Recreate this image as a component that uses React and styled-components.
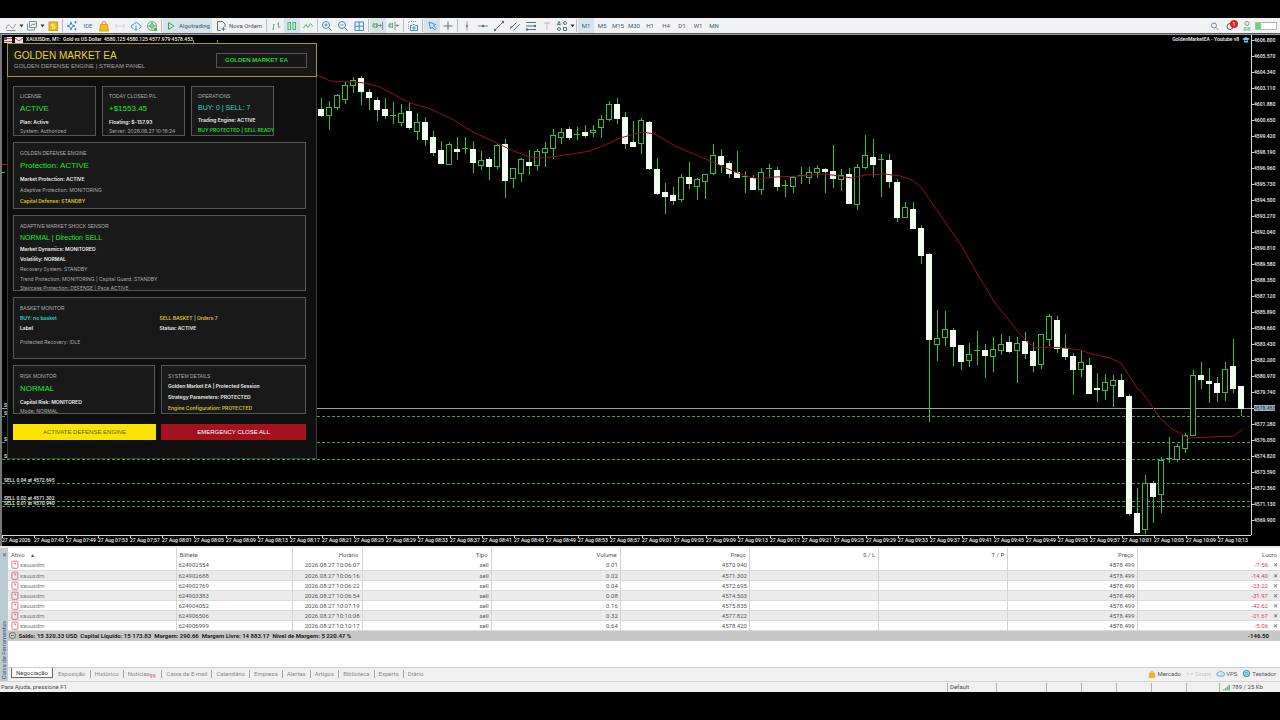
import React from "react";
import styled, { createGlobalStyle } from "styled-components";

const GlobalStyle = createGlobalStyle`
  * {
    box-sizing: border-box;
  }
  body {
    margin: 0;
    background: #000;
    font-family: Roboto, "Open Sans", sans-serif;
    font-size: 6px;
    line-height: 10px;
  }
  button {
    font: inherit;
    color: inherit;
    background: none;
    border: none;
    border-radius: 0;
    padding: 0;
    cursor: pointer;
  }
`;

const Page = styled.div`
  display: flex;
  flex-direction: column;
  min-height: 100vh;
  padding: 18px 0 28px;
`;

/* ---------- toolbar ---------- */

const Toolbar = styled.header`
  display: flex;
  align-items: stretch;
  height: 16px;
  padding: 0 3px 0 4px;
  background: #f1f2f3;
  border-bottom: 1px solid #55585a;
  color: #56707f;
`;

const ToolButton = styled.button`
  display: flex;
  align-items: center;
  justify-content: center;
  gap: 2px;
  width: ${(p) => p.$width || 16}px;
  flex: none;
  white-space: nowrap;
  background: ${(p) => (p.$active ? "#d5e4ea" : "transparent")};
  color: ${(p) => p.$color || "#56707f"};
`;

const Separator = styled.span`
  width: 1px;
  margin: 1px;
  background: #b9bcbe;
  flex: none;
`;

const Spacer = styled.span`
  flex: 1;
`;

const Alert = styled.span`
  position: relative;
  display: flex;
`;

const AlertCount = styled.span`
  position: absolute;
  top: 0;
  right: -1px;
  width: 8px;
  height: 8px;
  border-radius: 50%;
  background: #d32626;
  color: #fff;
  font-size: 6px;
  line-height: 8px;
  text-align: center;
`;

const Battery = styled.span`
  align-self: center;
  width: 22px;
  height: 8px;
  border: 1px solid #b4b8ba;
  background: linear-gradient(to right, #5be35b 5px, #fff 5px);
`;

const Svg = styled.svg`
  display: block;
  flex: none;
  fill: none;
  stroke: currentColor;
  stroke-width: 1;
`;

const Icon = ({ size = 12, children }) => (
  <Svg width={size} height={size} viewBox="0 0 12 12" aria-hidden="true">
    {children}
  </Svg>
);

const Caret = () => (
  <Svg width="5" height="4" viewBox="0 0 5 4" aria-hidden="true">
    <path d="M0.5 0.5h4L2.5 3.2z" fill="#333" stroke="none" />
  </Svg>
);

const icons = {
  line: <path d="M1 8.500c2-5 3-4 5-1.500s3 .5 4.500-3M1.500 10.500h9" stroke="#8a979e" />,
  layers: (
    <>
      <path d="M3.500 1.500h7v6h-7zM1.500 3.500v6.500h7v-2" stroke="#7d929e" />
      <path d="M5 6l1.500-2 1.500 1 1.500-2" stroke="#6fa47a" />
    </>
  ),
  dollar: (
    <>
      <rect x="2" y="2" width="8.500" height="8.500" fill="#e9bb12" stroke="#cf9f08" />
      <path d="M7.800 4.200h-3v2h3v2h-3" stroke="#fff3c0" />
    </>
  ),
  spark: (
    <>
      <path d="M5 2l1 3 3 1-3 1-1 3-1-3-3-1 3-1z" stroke="#3d97c9" />
      <path d="M9.500 1v2.500M8.200 2.200h2.500M9.500 8v2.500M8.200 9.200h2.500" stroke="#3d97c9" />
    </>
  ),
  bag: (
    <>
      <path d="M4 5V3.500a2 2 0 0 1 4 0V5" stroke="#c79a1a" />
      <path d="M2.500 4.500h7l1 6.500h-9z" fill="#f1bb16" stroke="#dca50f" />
    </>
  ),
  signal: <path d="M2 4v4M4 5v2M6 5.500v1M8 5v2M10 4v4" stroke="#c8cdd0" />,
  cloud: (
    <>
      <path d="M3.500 8.500a2 2 0 0 1 0-4 3 3 0 0 1 5.500 0 2 2 0 0 1 0 4" stroke="#4d9cc8" />
      <path d="M6 5.500v5M4.500 9l1.500 1.500L7.500 9" stroke="#4d9cc8" />
    </>
  ),
  globe: (
    <>
      <circle cx="6" cy="6" r="4.500" stroke="#5db777" />
      <circle cx="6" cy="6" r="2.200" stroke="#5db777" />
      <path d="M1.500 6h9M6 1.500v9" stroke="#5db777" />
      <circle cx="9.500" cy="9.500" r="1.800" fill="#43b060" stroke="none" />
    </>
  ),
  play: <path d="M3.500 2.500l5.500 3.500-5.500 3.500z" stroke="#2fae62" />,
  order: (
    <>
      <path d="M2.500 1.500h5l2.500 2.500v3M2.500 1.500v9h3" stroke="#62737d" />
      <path d="M8.500 7v4M6.500 9h4" stroke="#62737d" />
    </>
  ),
  bars: <path d="M3.500 4v6M2 9h1.500M3.500 5H5M8.500 2v6M7 4h1.500M8.500 7h2" stroke="#7cae88" />,
  candles: (
    <>
      <rect x="2" y="2.500" width="2.500" height="7" stroke="#49b86b" />
      <rect x="7" y="2.500" width="2.500" height="7" stroke="#49b86b" />
    </>
  ),
  wave: <path d="M1.500 8l2.500-3.500 2 3 2.500-4 2.500 3" stroke="#49b86b" />,
  zoomIn: (
    <>
      <circle cx="5" cy="5" r="3.500" stroke="#3a8fc2" />
      <path d="M7.600 7.600l3 3M3.500 5h3M5 3.500v3" stroke="#3a8fc2" />
    </>
  ),
  zoomOut: (
    <>
      <circle cx="5" cy="5" r="3.500" stroke="#3a8fc2" />
      <path d="M7.600 7.600l3 3M3.500 5h3" stroke="#3a8fc2" />
    </>
  ),
  tiles: <path d="M2 2h8.500v8.500H2zM6.200 2v8.500M2 6.200h8.500" stroke="#3a8fc2" />,
  shift: (
    <>
      <path d="M2 3v5M4.500 3v5M1 4h4.500v3H1z" stroke="#58bb76" />
      <path d="M6 5.500h3M8 4l1.500 1.500L8 7M10.500 2v8" stroke="#7d929e" />
    </>
  ),
  scroll: (
    <>
      <path d="M2 3v5M4.500 3v5M1 4h3.500v3H1z" stroke="#58bb76" />
      <path d="M7 2v8M11 5.500H8.500M9.500 4L8 5.500 9.500 7" stroke="#7d929e" />
    </>
  ),
  camera: (
    <>
      <path d="M1.500 9V1.500h8.500" stroke="#9aa7ae" strokeDasharray="1 1" />
      <path d="M3.500 5.500h1.500l1-1h1.500l1 1h2v5h-7z" stroke="#3f8fb9" />
      <circle cx="7" cy="8" r="1.200" stroke="#3f8fb9" />
    </>
  ),
  cursor: <path d="M3 2l6.500 2.500-2 1.200 2.500 2.800-1.500 1.500L6 7 4.500 9z" stroke="#3f92c4" />,
  cross: <path d="M6 1.500v9M1.500 6h9" stroke="#5c7480" />,
  vline: (
    <>
      <path d="M6 1.500v9" stroke="#8797a0" />
      <circle cx="6" cy="6" r="1" fill="#5c7480" stroke="none" />
    </>
  ),
  hline: (
    <>
      <path d="M1 6h10" stroke="#7b8d97" />
      <circle cx="6" cy="6" r="1.300" fill="#5c7480" stroke="none" />
    </>
  ),
  trend: (
    <>
      <path d="M2 10l8-8" />
      <circle cx="2" cy="10" r="1.200" fill="#56707f" stroke="none" />
      <circle cx="10" cy="2" r="1.200" fill="#56707f" stroke="none" />
    </>
  ),
  channel: <path d="M1.500 8.500l6-6M4.500 10.500l6-6M1.500 8.500l1-2.500M9 6l1.500-1.500" />,
  fibo: (
    <>
      <path d="M1 2.500h10M1 6h8M1 9.500h10" />
      <circle cx="10" cy="6" r="1.200" fill="#56707f" stroke="none" />
      <circle cx="2" cy="9.500" r="1.200" fill="#56707f" stroke="none" />
    </>
  ),
  text: <path d="M3 3h6M6 3v7" stroke="#b2bcc1" />,
  shapes: (
    <>
      <path d="M3 1.500l1.500 3h-3zM7.500 7.500h3v3h-3z" />
      <circle cx="9" cy="3" r="1.500" />
      <circle cx="3" cy="9" r="1.500" />
    </>
  ),
  search: (
    <>
      <circle cx="5" cy="5.500" r="2.500" stroke="#768ea0" />
      <path d="M7 7.500l2.500 2.500" stroke="#768ea0" />
    </>
  ),
  bell: <circle cx="5" cy="6.500" r="3" stroke="#4c5a62" />,
  user: (
    <>
      <circle cx="6" cy="3.500" r="2" stroke="#58b569" />
      <path d="M2.500 8h7M2.500 10h7M4 7v4M8 7v4" stroke="#7cc58a" />
    </>
  ),
  doc: (
    <>
      <rect x="2.500" y="1.500" width="8" height="9.500" rx="1" stroke="#d0526a" />
      <path d="M5 4h2.500v2" stroke="#d0526a" />
    </>
  ),
  vps: <path d="M3.500 9.500a2.500 2.500 0 0 1 0-5 3 3 0 0 1 5.500 0 2.500 2.500 0 0 1 0 5z" fill="#cfe6f4" stroke="#4b94c2" />,
  chip: (
    <>
      <circle cx="6" cy="6" r="4" fill="#d5eef6" stroke="#3a96bd" strokeWidth="1.500" />
      <path d="M4.500 4.500h3v3h-3z" stroke="#3a96bd" />
    </>
  ),
  network: <path d="M2 10V8.500M4.500 10V7M7 10V5M9.500 10V2.500" stroke="#4bb36a" strokeWidth="1.800" />,
  balance: (
    <>
      <circle cx="6" cy="6" r="4.200" stroke="#555" />
      <path d="M4 6h4" stroke="#555" />
    </>
  ),
};

const Tool = ({ name, label, ...rest }) => (
  <ToolButton type="button" aria-label={label || name} {...rest}>
    <Icon>{icons[name]}</Icon>
  </ToolButton>
);

const frames = ["M1", "M5", "M15", "M30", "H1", "H4", "D1", "W1", "MN"];

const TopBar = () => (
  <Toolbar>
    <ToolButton type="button" $width={21} aria-label="Charts">
      <Icon>{icons.line}</Icon>
      <Caret />
    </ToolButton>
    <ToolButton type="button" $width={20} aria-label="Profiles">
      <Icon>{icons.layers}</Icon>
      <Caret />
    </ToolButton>
    <Tool name="dollar" />
    <Separator />
    <Tool name="spark" />
    <ToolButton type="button" $color="#4a6a94">IDE</ToolButton>
    <Tool name="bag" />
    <Tool name="signal" />
    <Tool name="cloud" />
    <Tool name="globe" />
    <Separator />
    <ToolButton type="button" $width={49} $active $color="#43525c">
      <Icon>{icons.play}</Icon>
      Algotrading
    </ToolButton>
    <ToolButton type="button" $width={53} $color="#43525c">
      <Icon>{icons.order}</Icon>
      Nova Ordem
    </ToolButton>
    <Separator />
    <Tool name="bars" />
    <Tool name="candles" $active />
    <Tool name="wave" />
    <Separator />
    <Tool name="zoomIn" />
    <Tool name="zoomOut" />
    <Tool name="tiles" />
    <Separator />
    <Tool name="shift" $active />
    <Tool name="scroll" />
    <Separator />
    <Tool name="camera" />
    <Separator />
    <Tool name="cursor" $active />
    <Tool name="cross" />
    <Separator />
    <Tool name="vline" />
    <Tool name="hline" />
    <Tool name="trend" />
    <Tool name="channel" />
    <Tool name="fibo" />
    <Tool name="text" />
    <ToolButton type="button" $width={20} aria-label="Shapes">
      <Icon>{icons.shapes}</Icon>
      <Caret />
    </ToolButton>
    <Separator />
    {frames.map((f) => (
      <ToolButton type="button" key={f} $active={f === "M1"} $color="#3f5f70">
        {f}
      </ToolButton>
    ))}
    <Spacer />
    <Tool name="search" />
    <ToolButton type="button" aria-label="Notifications">
      <Alert>
        <Icon>{icons.bell}</Icon>
        <AlertCount>1</AlertCount>
      </Alert>
    </ToolButton>
    <Tool name="user" />
    <Battery />
  </Toolbar>
);

/* ---------- chart ---------- */

const ChartArea = styled.section`
  position: relative;
  display: grid;
  grid-template-columns: 1fr 29px;
  grid-template-rows: 500px 11px;
  border-top: 1px solid #9a9a9a;
  border-left: 2px solid #777;
  background: #000;
  color: #f2f2f2;
  font-size: 5px;
  font-weight: 500;
  overflow: hidden;
`;

const Plot = styled.svg`
  display: block;
  width: 100%;
  height: 500px;
`;

const PriceAxis = styled.div`
  border-left: 1px solid #d8d8d8;
  margin-top: -3px;
`;

const Price = styled.div`
  display: flex;
  align-items: center;
  height: 16px;

  &::before {
    content: "";
    width: 2px;
    border-top: 1px solid #d8d8d8;
  }

  span {
    line-height: 6px;
    color: ${(p) => (p.$current ? "#2d3b4c" : "inherit")};
    background: ${(p) => (p.$current ? "#9fb0c2" : "none")};
  }
`;

const TimeAxis = styled.div`
  display: flex;
  grid-column: 1 / -1;
  margin-right: 29px;
  border-top: 1px solid #d8d8d8;
`;

const Time = styled.span`
  width: 32px;
  flex: none;
  height: 10px;
  line-height: 9px;
  white-space: nowrap;
  background: linear-gradient(#d8d8d8, #d8d8d8) left top / 1px 2px no-repeat;
`;

const ChartTitle = styled.div`
  position: absolute;
  top: 0;
  left: 2px;
  right: 30px;
  display: flex;
  align-items: center;
  gap: 3px;
  line-height: 9px;
  white-space: pre;
`;

// x grows by 8 per minute; each entry is [high, low, top, bottom, falling]
const candles = [
  [98, 116, 109, 115, 1], [101, 129, 107, 115, 0], [94, 109, 95, 107, 0], [82, 103, 85, 99, 0],
  [77, 92, 80, 85, 0], [76, 104, 78, 91, 1], [89, 109, 92, 97, 1], [97, 120, 100, 109, 1],
  [98, 118, 109, 115, 1], [102, 123, 116, 116, 0], [104, 125, 113, 122, 0], [103, 129, 111, 127, 1],
  [113, 139, 122, 131, 0], [117, 145, 122, 139, 1], [131, 155, 137, 152, 1], [141, 163, 150, 163, 1],
  [142, 164, 144, 164, 0], [137, 159, 149, 151, 1], [137, 153, 149, 149, 0], [141, 172, 149, 162, 1],
  [151, 169, 160, 165, 0], [157, 179, 159, 166, 1], [144, 168, 145, 166, 0], [139, 197, 144, 180, 1],
  [168, 187, 168, 178, 0], [158, 181, 159, 173, 0], [150, 174, 162, 165, 1], [149, 170, 151, 165, 0],
  [142, 166, 148, 152, 0], [129, 158, 135, 148, 0], [128, 143, 132, 137, 0], [127, 139, 129, 137, 1],
  [127, 139, 135, 135, 0], [125, 137, 132, 135, 1], [125, 136, 130, 132, 0], [115, 137, 119, 127, 0],
  [101, 120, 104, 119, 0], [98, 123, 104, 118, 1], [112, 148, 117, 143, 1], [121, 146, 142, 146, 1],
  [118, 153, 120, 143, 0], [121, 169, 122, 168, 1], [158, 194, 169, 193, 1], [183, 213, 192, 196, 1],
  [187, 204, 195, 200, 1], [174, 201, 177, 199, 0], [162, 188, 177, 183, 1], [178, 199, 179, 186, 0],
  [174, 198, 174, 181, 0], [144, 174, 155, 173, 0], [149, 172, 156, 164, 1], [161, 177, 163, 173, 1],
  [151, 177, 172, 177, 1], [171, 192, 177, 177, 0], [175, 189, 178, 189, 1], [168, 194, 172, 189, 0],
  [164, 177, 169, 169, 0], [167, 190, 170, 186, 1], [180, 196, 186, 186, 0], [176, 192, 177, 186, 0],
  [167, 183, 176, 176, 0], [167, 183, 172, 177, 0], [165, 177, 168, 172, 0], [168, 192, 169, 171, 1],
  [145, 187, 171, 178, 1], [169, 190, 175, 179, 0], [168, 203, 174, 203, 1], [164, 209, 167, 204, 0],
  [135, 168, 155, 167, 0], [139, 176, 157, 164, 1], [154, 196, 160, 160, 0], [154, 187, 160, 181, 1],
  [179, 221, 182, 217, 1], [202, 217, 207, 217, 0], [202, 228, 209, 228, 1], [225, 263, 228, 255, 1],
  [253, 421, 254, 339, 1], [310, 360, 338, 344, 0], [311, 345, 329, 337, 0], [328, 365, 330, 346, 1],
  [345, 369, 345, 361, 1], [343, 366, 354, 360, 0], [331, 364, 351, 351, 0], [344, 377, 350, 355, 1],
  [337, 371, 349, 356, 0], [334, 354, 344, 350, 0], [336, 352, 342, 351, 1], [337, 382, 343, 350, 0],
  [332, 358, 341, 353, 1], [342, 371, 351, 365, 1], [334, 368, 334, 364, 0], [314, 345, 316, 339, 0],
  [316, 352, 320, 348, 1], [334, 359, 348, 356, 1], [353, 394, 356, 369, 1], [351, 376, 362, 369, 0],
  [358, 393, 365, 393, 1], [373, 401, 388, 389, 1], [374, 399, 382, 390, 0], [375, 406, 380, 385, 0],
  [374, 396, 380, 396, 1], [394, 515, 396, 513, 1], [488, 533, 513, 532, 1], [475, 533, 483, 529, 0],
  [481, 522, 483, 496, 1], [457, 512, 460, 494, 0], [437, 462, 459, 459, 0], [444, 461, 446, 459, 0],
  [433, 452, 435, 448, 0], [370, 435, 375, 435, 0], [362, 388, 375, 379, 1], [368, 402, 381, 383, 1],
  [377, 401, 383, 392, 1], [362, 400, 369, 392, 0], [339, 392, 366, 388, 1], [386, 415, 386, 408, 1],
];

const average =
  "317,75 330,81 352,82 365,83 380,87 395,95 410,103 428,108 450,118 475,133 497,143 511,150 530,157 545,158 565,155 590,151 605,145 620,138 642,132 655,134 675,146 708,160 735,172 750,177 760,179 775,177 800,176 825,174 852,178 865,175 885,174 900,176 912,180 921,187 930,200 945,222 961,245 978,275 995,303 1012,324 1025,340 1035,348 1048,347 1065,348 1080,350 1092,354 1110,358 1121,363 1137,388 1145,396 1160,418 1172,429 1188,438 1210,437 1234,436 1243,429";

const orders = [
  [416, "SELL 0.32 at 4577.822"],
  [442, "SELL 0.16 at 4575.835"],
  [459, "SELL 0.08 at 4574.503"],
  [483, "SELL 0.04 at 4572.695"],
  [501, "SELL 0.02 at 4571.302"],
  [506, "SELL 0.01 at 4570.940"],
];

const Candle = ({ x, data: [high, low, top, bottom, falling] }) => (
  <>
    <rect x={x} y={high} width="1" height={low - high + 1} fill="#3cc03c" />
    {top === bottom && <rect x={x - 3} y={top - 1} width="6" height="1" fill="#3cc03c" />}
    {top !== bottom && falling === 1 && (
      <rect x={x - 3} y={top} width="6" height={bottom - top + 1} fill="#f2fff0" />
    )}
    {top !== bottom && falling === 0 && (
      <rect x={x - 2.5} y={top + 0.5} width="5" height={bottom - top} fill="#000" stroke="#3cc03c" />
    )}
  </>
);

const prices = Array.from({ length: 31 }, (_, i) => (4606.8 - i * 1.23).toFixed(3));
const CURRENT = 23;

const times = Array.from({ length: 39 }, (_, i) => {
  if (i === 0) return "27 Aug 2026";
  const minutes = 7 * 60 + 45 + (i - 1) * 4;
  const hh = String(Math.floor(minutes / 60)).padStart(2, "0");
  const mm = String(minutes % 60).padStart(2, "0");
  return `27 Aug ${hh}:${mm}`;
});

const Chart = ({ children }) => (
  <ChartArea>
    <Plot viewBox="2 35 1249 500" preserveAspectRatio="xMaxYMin slice">
      <path d="M193.500 40v4M217.500 40v4" stroke="#3cc03c" />
      <path d="M2 164.500h5" stroke="#b01826" />
      <path d="M2 172.500h3" stroke="#3cc03c" />
      {orders.map(([y, label]) => (
        <g key={label}>
          <path d={`M2 ${y + 0.5}H1251`} stroke="#3fa03f" strokeDasharray="3 2" />
          <text x="4" y={y - 1} fontSize="5" fill="#eee">
            {label}
          </text>
        </g>
      ))}
      <text x="4" y="407" fontSize="5" fill="#eee">SELL 0.64 at 4578.420</text>
      <path d="M2 408.500H1251" stroke="#8fa89b" />
      <g shapeRendering="crispEdges">
        {candles.map((c, i) => (
          <Candle key={i} x={321 + i * 8} data={c} />
        ))}
      </g>
      <polyline points={average} fill="none" stroke="#96101f" />
    </Plot>
    <PriceAxis>
      {prices.map((p, i) => (
        <Price key={p} $current={i === CURRENT}>
          <span>{i === CURRENT ? "4578.453" : p}</span>
        </Price>
      ))}
    </PriceAxis>
    <TimeAxis>
      {times.map((t) => (
        <Time key={t}>{t}</Time>
      ))}
    </TimeAxis>
    <ChartTitle>
      <Svg width="8" height="6" viewBox="0 0 8 6" aria-hidden="true">
        <path d="M0 0h8v6H0z" fill="#e8e8e8" stroke="none" />
        <path d="M0 1.500h8M0 4.500h8" stroke="#d0414d" />
        <path d="M0 0h3v3H0z" fill="#3b5aa8" stroke="none" />
      </Svg>
      <Svg width="8" height="6" viewBox="0 0 8 6" aria-hidden="true">
        <path d="M0 0h8v6H0z" fill="#e8e8e8" stroke="none" />
        <path d="M0 1l4 3 4-3" stroke="#d0414d" />
      </Svg>
      <span>XAUUSDm, M1:  Gold vs US Dollar  4580.125 4580.125 4577.979 4578.453</span>
      <Spacer />
      <span>GoldenMarketEA - Youtube v8</span>
      <Svg width="8" height="6" viewBox="0 0 8 6" aria-hidden="true">
        <path d="M0 2l4-2 4 2-4 2zM2 3v2.500h4V3" fill="#7cc3ee" stroke="none" />
      </Svg>
    </ChartTitle>
    {children}
  </ChartArea>
);

/* ---------- advisor panel lying over the chart ---------- */

const Panel = styled.aside`
  position: absolute;
  top: 8px;
  left: 5px;
  width: 310px;
  height: 416px;
  background: #0f0f0f;
  border: 1px solid #3c3c3c;
  font-family: "Liberation Sans", Arial, sans-serif;
  font-weight: 400;
`;

const PanelHead = styled.div`
  display: flex;
  align-items: center;
  justify-content: space-between;
  height: 34px;
  margin: -1px -1px 9px;
  padding: 0 9px 0 6px;
  background: #171717;
  border: 1px solid #a8982c;
`;

const PanelTitle = styled.h1`
  margin: 0;
  font-size: 10px;
  line-height: 12px;
  font-weight: 400;
  color: #e8d22a;
`;

const PanelSubtitle = styled.div`
  font-size: 6px;
  line-height: 9px;
  color: #a2a2a2;
`;

const Badge = styled.div`
  width: 91px;
  height: 15px;
  padding-left: 8px;
  border: 1px solid #555;
  font-size: 6px;
  line-height: 13px;
  font-weight: 700;
  color: #1fd62c;
`;

const PanelBody = styled.div`
  display: flex;
  flex-direction: column;
  gap: 6px;
  padding: 0 10px 0 5px;
`;

const CardRow = styled.div`
  display: grid;
  grid-template-columns: ${(p) => p.$columns};
  gap: 6px;
`;

const Card = styled.div`
  height: ${(p) => p.$height}px;
  padding: ${(p) => p.$top || 5}px 6px 0;
  background: #191919;
  border: 1px solid #555;
  white-space: nowrap;
`;

const Label = styled.div`
  line-height: 10px;
  color: #b0b0b0;
`;

const Value = styled.div`
  font-size: ${(p) => p.$size || 8}px;
  line-height: ${(p) => p.$line || 16}px;
  color: ${(p) => p.$color || "#22e630"};
`;

const Line = styled.div`
  line-height: ${(p) => p.$line || 10}px;
  font-family: Inter, "Liberation Sans", sans-serif;
  font-weight: ${(p) => (p.$dim ? 400 : 600)};
  color: ${(p) => p.$color || (p.$dim ? "#aaa" : "#ededed")};
`;

const Basket = styled.div`
  display: grid;
  grid-template-columns: 1fr 1fr;
  margin-bottom: 4px;
`;

const PanelActions = styled.div`
  display: grid;
  grid-template-columns: 143px 1fr;
  gap: 5px;
  margin-top: 4px;
`;

const PanelButton = styled.button`
  height: 16px;
  font-size: 6px;
  background: ${(p) => p.$bg};
  color: ${(p) => p.$fg};
`;

const AdvisorPanel = () => (
  <Panel>
    <PanelHead>
      <div>
        <PanelTitle>GOLDEN MARKET EA</PanelTitle>
        <PanelSubtitle>GOLDEN DEFENSE ENGINE | STREAM PANEL</PanelSubtitle>
      </div>
      <Badge>GOLDEN MARKET EA</Badge>
    </PanelHead>
    <PanelBody>
      <CardRow $columns="83px 83px 83px">
        <Card $height={50} $top={4}>
          <Label>LICENSE</Label>
          <Value>ACTIVE</Value>
          <Line>Plan: Active</Line>
          <Line $dim $line={8}>System: Authorized</Line>
        </Card>
        <Card $height={50} $top={4}>
          <Label>TODAY CLOSED P/L</Label>
          <Value>+$1553.45</Value>
          <Line>Floating: $-157.93</Line>
          <Line $dim $line={8}>Server: 2026.08.27 10:16:24</Line>
        </Card>
        <Card $height={50} $top={4}>
          <Label>OPERATIONS</Label>
          <Value $size={7} $line={14} $color="#35d6c4">BUY: 0 | SELL: 7</Value>
          <Line>Trading Engine: ACTIVE</Line>
          <Line $color="#1fd62c">BUY PROTECTED | SELL READY</Line>
        </Card>
      </CardRow>
      <Card $height={67}>
        <Label>GOLDEN DEFENSE ENGINE</Label>
        <Value>Protection: ACTIVE</Value>
        <Line $line={11}>Market Protection: ACTIVE</Line>
        <Line $line={11} $dim>Adaptive Protection: MONITORING</Line>
        <Line $line={11} $color="#d9c21f">Capital Defense: STANDBY</Line>
      </Card>
      <Card $height={76}>
        <Label>ADAPTIVE MARKET SHOCK SENSOR</Label>
        <Value $size={7} $line={13}>NORMAL | Direction SELL</Value>
        <Line>Market Dynamics: MONITORED</Line>
        <Line>Volatility: NORMAL</Line>
        <Line $dim>Recovery System: STANDBY</Line>
        <Line $dim>Trend Protection: MONITORING | Capital Guard: STANDBY</Line>
        <Line $dim $line={8}>Staircase Protection: DEFENSE | Pace ACTIVE</Line>
      </Card>
      <Card $height={62}>
        <Label>BASKET MONITOR</Label>
        <Basket>
          <Line $color="#2fd0b8">BUY: no basket</Line>
          <Line $color="#d9c21f">SELL BASKET | Orders 7</Line>
          <Line>Label</Line>
          <Line>Status: ACTIVE</Line>
        </Basket>
        <Line $dim>Protected Recovery: IDLE</Line>
      </Card>
      <CardRow $columns="142px 1fr">
        <Card $height={49}>
          <Label>RISK MONITOR</Label>
          <Value>NORMAL</Value>
          <Line>Capital Risk: MONITORED</Line>
          <Line $dim $line={8}>Mode: NORMAL</Line>
        </Card>
        <Card $height={49}>
          <Label>SYSTEM DETAILS</Label>
          <Line $line={11}>Golden Market EA | Protected Session</Line>
          <Line $line={11}>Strategy Parameters: PROTECTED</Line>
          <Line $line={11} $color="#d9c21f">Engine Configuration: PROTECTED</Line>
        </Card>
      </CardRow>
      <PanelActions>
        <PanelButton type="button" $bg="#fbe304" $fg="#6d6410">ACTIVATE DEFENSE ENGINE</PanelButton>
        <PanelButton type="button" $bg="#a5121f" $fg="#fff">EMERGENCY CLOSE ALL</PanelButton>
      </PanelActions>
    </PanelBody>
  </Panel>
);

/* ---------- toolbox ---------- */

const Toolbox = styled.section`
  display: flex;
  flex: 1;
  border-top: 2px solid #e9e9e9;
  background: #fff;
  color: #555;
`;

const Rail = styled.div`
  display: flex;
  flex-direction: column;
  align-items: center;
  justify-content: space-between;
  width: 8px;
  padding: 2px 0;
  background: #bccbd3;
  color: #41525c;
`;

const RailTitle = styled.span`
  writing-mode: vertical-rl;
  transform: rotate(180deg);
  line-height: 8px;
`;

const ToolboxBody = styled.div`
  display: flex;
  flex-direction: column;
  flex: 1;
  min-width: 0;
`;

const Positions = styled.table`
  width: 100%;
  table-layout: fixed;
  border-collapse: collapse;

  th,
  td {
    height: 10px;
    padding: 0 2px;
    line-height: 9px;
    font-weight: 400;
    text-align: right;
    white-space: nowrap;
    border-right: 1px solid #d4d4d4;
  }
  th {
    height: 12px;
    padding: 0 3px;
  }
  th:nth-child(-n + 2),
  td:nth-child(-n + 2) {
    text-align: left;
  }
  th:last-child,
  td:last-child {
    border-right: none;
  }
  tbody tr {
    border-bottom: 1px solid #dcdcdc;
  }
  tbody tr:nth-child(even) {
    background: #ebebeb;
  }
`;

const Symbol = styled.span`
  display: flex;
  align-items: center;
  gap: 1px;
  color: #777;
`;

const Profit = styled.span`
  color: #d6405a;
  margin-right: 5px;
`;

const Summary = styled.div`
  display: flex;
  align-items: center;
  justify-content: space-between;
  height: 10px;
  padding-right: 11px;
  background: #c6c6c6;
  color: #1d1d1d;
  font-weight: 700;
  white-space: pre;

  span {
    display: flex;
    align-items: center;
  }
`;

const Tabs = styled.nav`
  display: flex;
  align-items: center;
  height: 14px;
  margin-top: auto;
  padding: 0 4px 2px 3px;
  background: #f0f0f0;
  border-top: 1px solid #cfcfcf;
`;

const Tab = styled.button`
  height: 8px;
  line-height: 8px;
  padding: 0 4px;
  white-space: nowrap;
  color: #8a8a8a;
  border-right: ${(p) => (p.$last ? "none" : "1px solid #a5a5a5")};

  sub {
    color: #d8404c;
    font-size: 5px;
    line-height: 5px;
    margin-right: 2px;
  }
`;

const ActiveTab = styled(Tab)`
  align-self: flex-start;
  height: 10px;
  background: #fff;
  color: #444;
  margin-right: 1px;
  border: 1px solid #666;
  border-top: none;
`;

const Service = styled.button`
  display: flex;
  align-items: center;
  gap: 1px;
  margin-left: 5px;
  color: ${(p) => (p.$off ? "#c3c3c3" : "#555")};
`;

const StatusBar = styled.footer`
  display: flex;
  align-items: center;
  height: 11px;
  background: #f0f0f0;
  border-top: 1px solid #d6d6d6;
  color: #4d4d4d;
`;

const StatusText = styled.span`
  flex: 1;
  padding-left: 1px;
`;

const StatusCell = styled.span`
  display: flex;
  align-items: center;
  gap: 1px;
  width: ${(p) => p.$width}px;
  height: 9px;
  padding-left: 2px;
  border-left: 1px solid #b0b0b0;
`;

const positions = [
  ["624902554", "10:06:07", "0.01", "4570.940", "-7.56"],
  ["624902688", "10:06:16", "0.02", "4571.302", "-14.40"],
  ["624902769", "10:06:22", "0.04", "4572.695", "-23.22"],
  ["624903383", "10:06:54", "0.08", "4574.503", "-31.97"],
  ["624904052", "10:07:19", "0.16", "4575.835", "-42.62"],
  ["624906506", "10:10:08", "0.32", "4577.822", "-21.67"],
  ["624906999", "10:10:17", "0.64", "4578.420", "-5.06"],
];

const tabs = ["Exposição", "Histórico", "Notícias", "Caixa de E-mail", "Calendário", "Empresa", "Alertas", "Artigos", "Biblioteca", "Experts", "Diário"];

const PositionsTable = () => (
  <Positions>
    <colgroup>
      <col width="168" />
      <col width="116" />
      <col width="70" />
      <col span="6" />
      <col width="143" />
    </colgroup>
    <thead>
      <tr>
        <th>Ativo &nbsp; &nbsp;▴</th>
        <th>Bilhete</th>
        <th>Horário</th>
        <th>Tipo</th>
        <th>Volume</th>
        <th>Preço</th>
        <th>S / L</th>
        <th>T / P</th>
        <th>Preço</th>
        <th>Lucro</th>
      </tr>
    </thead>
    <tbody>
      {positions.map(([ticket, time, volume, price, profit]) => (
        <tr key={ticket}>
          <td>
            <Symbol>
              <Icon size={9}>{icons.doc}</Icon>
              xauusdm
            </Symbol>
          </td>
          <td>{ticket}</td>
          <td>2026.08.27 {time}</td>
          <td>sell</td>
          <td>{volume}</td>
          <td>{price}</td>
          <td />
          <td />
          <td>4578.499</td>
          <td>
            <Profit>{profit}</Profit>
            <button type="button" aria-label={`Close ${ticket}`}>✕</button>
          </td>
        </tr>
      ))}
    </tbody>
  </Positions>
);

const App = () => {
  return (
    <Page>
      <GlobalStyle />
      <TopBar />
      <Chart>
        <AdvisorPanel />
      </Chart>
      <Toolbox>
        <Rail>
          <button type="button" aria-label="Close toolbox">✕</button>
          <RailTitle>Caixa de Ferramentas</RailTitle>
        </Rail>
        <ToolboxBody>
          <PositionsTable />
          <Summary>
            <span>
              <Icon size={9}>{icons.balance}</Icon>
              {" Saldo: 15 320.33 USD  Capital Líquido: 15 173.83  Margem: 290.66  Margem Livre: 14 883.17  Nível de Margem: 5 220.47 %"}
            </span>
            <span>-146.50</span>
          </Summary>
          <Tabs>
            <ActiveTab type="button">Negociação</ActiveTab>
            {tabs.map((t) => (
              <Tab type="button" key={t} $last={t === "Diário"}>
                {t}
                {t === "Notícias" && <sub>99</sub>}
              </Tab>
            ))}
            <Spacer />
            <Service type="button">
              <Icon size={8}>{icons.bag}</Icon>
              Mercado
            </Service>
            <Service type="button" $off>
              <Icon size={8}>{icons.signal}</Icon>
              Sinais
            </Service>
            <Service type="button">
              <Icon size={9}>{icons.vps}</Icon>
              VPS
            </Service>
            <Service type="button">
              <Icon size={9}>{icons.chip}</Icon>
              Testador
            </Service>
          </Tabs>
        </ToolboxBody>
      </Toolbox>
      <StatusBar>
        <StatusText>Para Ajuda, pressione F1</StatusText>
        <StatusCell $width={49}>Default</StatusCell>
        <StatusCell $width={50} />
        <StatusCell $width={35} />
        <StatusCell $width={35} />
        <StatusCell $width={35} />
        <StatusCell $width={35} />
        <StatusCell $width={33} />
        <StatusCell $width={61}>
          <Icon size={9}>{icons.network}</Icon>
          789 / 25 Kb
        </StatusCell>
      </StatusBar>
    </Page>
  );
};

export default App;
